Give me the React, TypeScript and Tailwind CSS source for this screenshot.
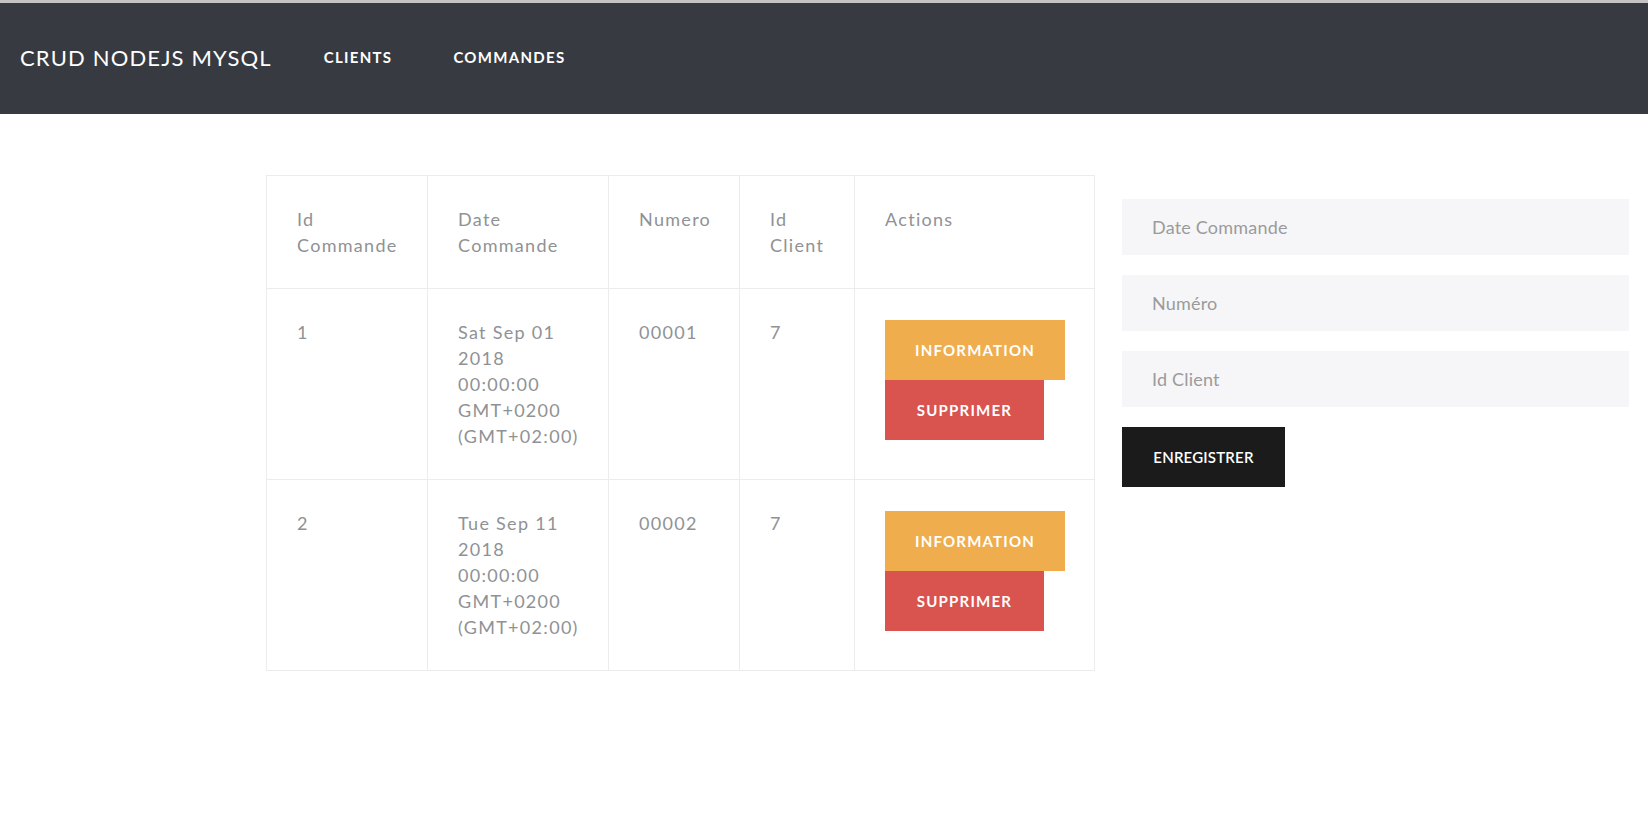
const commandes = [
  { id: 1, date: ["Sat Sep 01", "2018", "00:00:00", "GMT+0200", "(GMT+02:00)"], numero: "00001", client: 7 },
  { id: 2, date: ["Tue Sep 11", "2018", "00:00:00", "GMT+0200", "(GMT+02:00)"], numero: "00002", client: 7 },
];

const cell = "border border-[#ececec] px-[30px] pt-[30px] pb-[30px] align-top text-left font-normal whitespace-nowrap";

function Navbar() {
  return (
    <nav className="flex h-[114px] items-center border-t-[3px] border-t-[#c4c4c4] bg-[#373b41] pb-[3px] pl-5 text-white">
      <span className="text-[22px] tracking-[1.15px]">CRUD NODEJS MYSQL</span>
      <a className="ml-[52px] text-[15px] font-bold tracking-[1.3px]">CLIENTS</a>
      <a className="ml-[61px] text-[15px] font-bold tracking-[1.3px]">COMMANDES</a>
    </nav>
  );
}

function Field({ placeholder }: { placeholder: string }) {
  return (
    <input
      placeholder={placeholder}
      className="h-[56px] w-full bg-[#f6f6f8] px-[30px] text-[18px] tracking-[0.2px] text-[#555] outline-none placeholder:text-[#9b9b9b]"
    />
  );
}

export default function App() {
  return (
    <div className="min-h-[829px] bg-white font-['Lato','Open_Sans',sans-serif]">
      <Navbar />
      <main className="flex items-start pl-[266px] pt-[61px]">
        <table className="w-[829px] shrink-0 table-fixed border-collapse text-[18px] leading-[26px] tracking-[1.3px] text-[#8f9295]">
          <colgroup>
            <col className="w-[161px]" />
            <col className="w-[181px]" />
            <col className="w-[131px]" />
            <col className="w-[115px]" />
            <col />
          </colgroup>
          <thead>
            <tr>
              <th className={cell}>
                Id
                <br />
                Commande
              </th>
              <th className={cell}>
                Date
                <br />
                Commande
              </th>
              <th className={cell}>Numero</th>
              <th className={cell}>
                Id
                <br />
                Client
              </th>
              <th className={cell}>Actions</th>
            </tr>
          </thead>
          <tbody>
            {commandes.map((c) => (
              <tr key={c.id}>
                <td className={cell}>{c.id}</td>
                <td className={cell}>
                  {c.date.map((l) => (
                    <div key={l}>{l}</div>
                  ))}
                </td>
                <td className={cell}>{c.numero}</td>
                <td className={cell}>{c.client}</td>
                <td className={`${cell} pt-[31px]`}>
                  <button className="block h-[60px] w-[180px] bg-[#efad4e] text-[15px] font-bold tracking-[1.2px] text-white">
                    INFORMATION
                  </button>
                  <button className="block h-[60px] w-[159px] bg-[#d9534f] text-[15px] font-bold tracking-[1.2px] text-white">
                    SUPPRIMER
                  </button>
                </td>
              </tr>
            ))}
          </tbody>
        </table>
        <form className="ml-[27px] mt-[24px] flex w-[507px] flex-col gap-5">
          <Field placeholder="Date Commande" />
          <Field placeholder="Numéro" />
          <Field placeholder="Id Client" />
          <button
            type="button"
            className="h-[60px] w-[163px] bg-[#1b1b1b] text-[15px] font-semibold tracking-[0.2px] text-white"
          >
            ENREGISTRER
          </button>
        </form>
      </main>
    </div>
  );
}
